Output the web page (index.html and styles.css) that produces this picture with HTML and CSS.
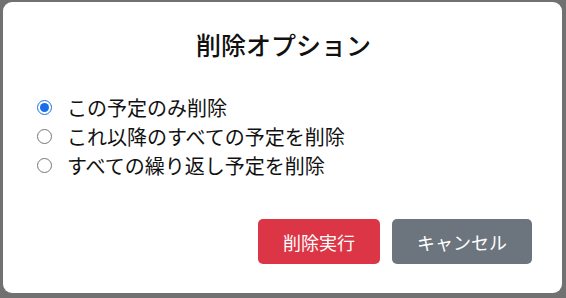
FILE: index.html
```html
<!DOCTYPE html>
<html lang="ja">
<head>
<meta charset="utf-8">
<title>削除オプション</title>
<link rel="stylesheet" href="styles.css">
</head>
<body>
<div class="modal">
  <h2 class="modal-title">削除オプション</h2>
  <div class="options">
    <label class="option"><input type="radio" name="del" checked><span>この予定のみ削除</span></label>
    <label class="option"><input type="radio" name="del"><span>これ以降のすべての予定を削除</span></label>
    <label class="option"><input type="radio" name="del"><span>すべての繰り返し予定を削除</span></label>
  </div>
  <div class="actions">
    <button class="btn btn-danger">削除実行</button>
    <button class="btn btn-secondary">キャンセル</button>
  </div>
</div>
</body>
</html>
```

FILE: styles.css
```css
html, body {
  margin: 0;
  height: 100%;
}
body {
  background: #717171;
  padding: 2px 4px 5px 3px;
  box-sizing: border-box;
  font-family: "Noto Sans CJK JP", "Noto Sans", sans-serif;
  color: #111;
}
.modal {
  background: #fff;
  border-radius: 9px;
  height: 100%;
  box-sizing: border-box;
  padding: 27px 30px 29px 34px;
  display: flex;
  flex-direction: column;
}
.modal-title {
  margin: 0;
  font-size: 25px;
  font-weight: 500;
  line-height: 30px;
  text-align: center;
  padding-right: 2px;
}
.options {
  margin-top: 34px;
  display: flex;
  flex-direction: column;
}
.option {
  display: flex;
  align-items: center;
  height: 29px;
  font-size: 20px;
  line-height: 29px;
}
.option input {
  margin: 0 15px 0 0;
  width: 15px;
  height: 15px;
  accent-color: #1a6fe8;
}
.actions {
  margin-top: auto;
  display: flex;
  justify-content: flex-end;
  gap: 12px;
}
.btn {
  font-family: inherit;
  font-size: 18px;
  line-height: 24px;
  padding: 10px 25px;
  height: 45px;
  border: none;
  border-radius: 5px;
  color: #fff;
}
.btn-danger {
  background: #dc3545;
  width: 122px;
}
.btn-secondary {
  background: #6c757d;
  width: 140px;
}
```
